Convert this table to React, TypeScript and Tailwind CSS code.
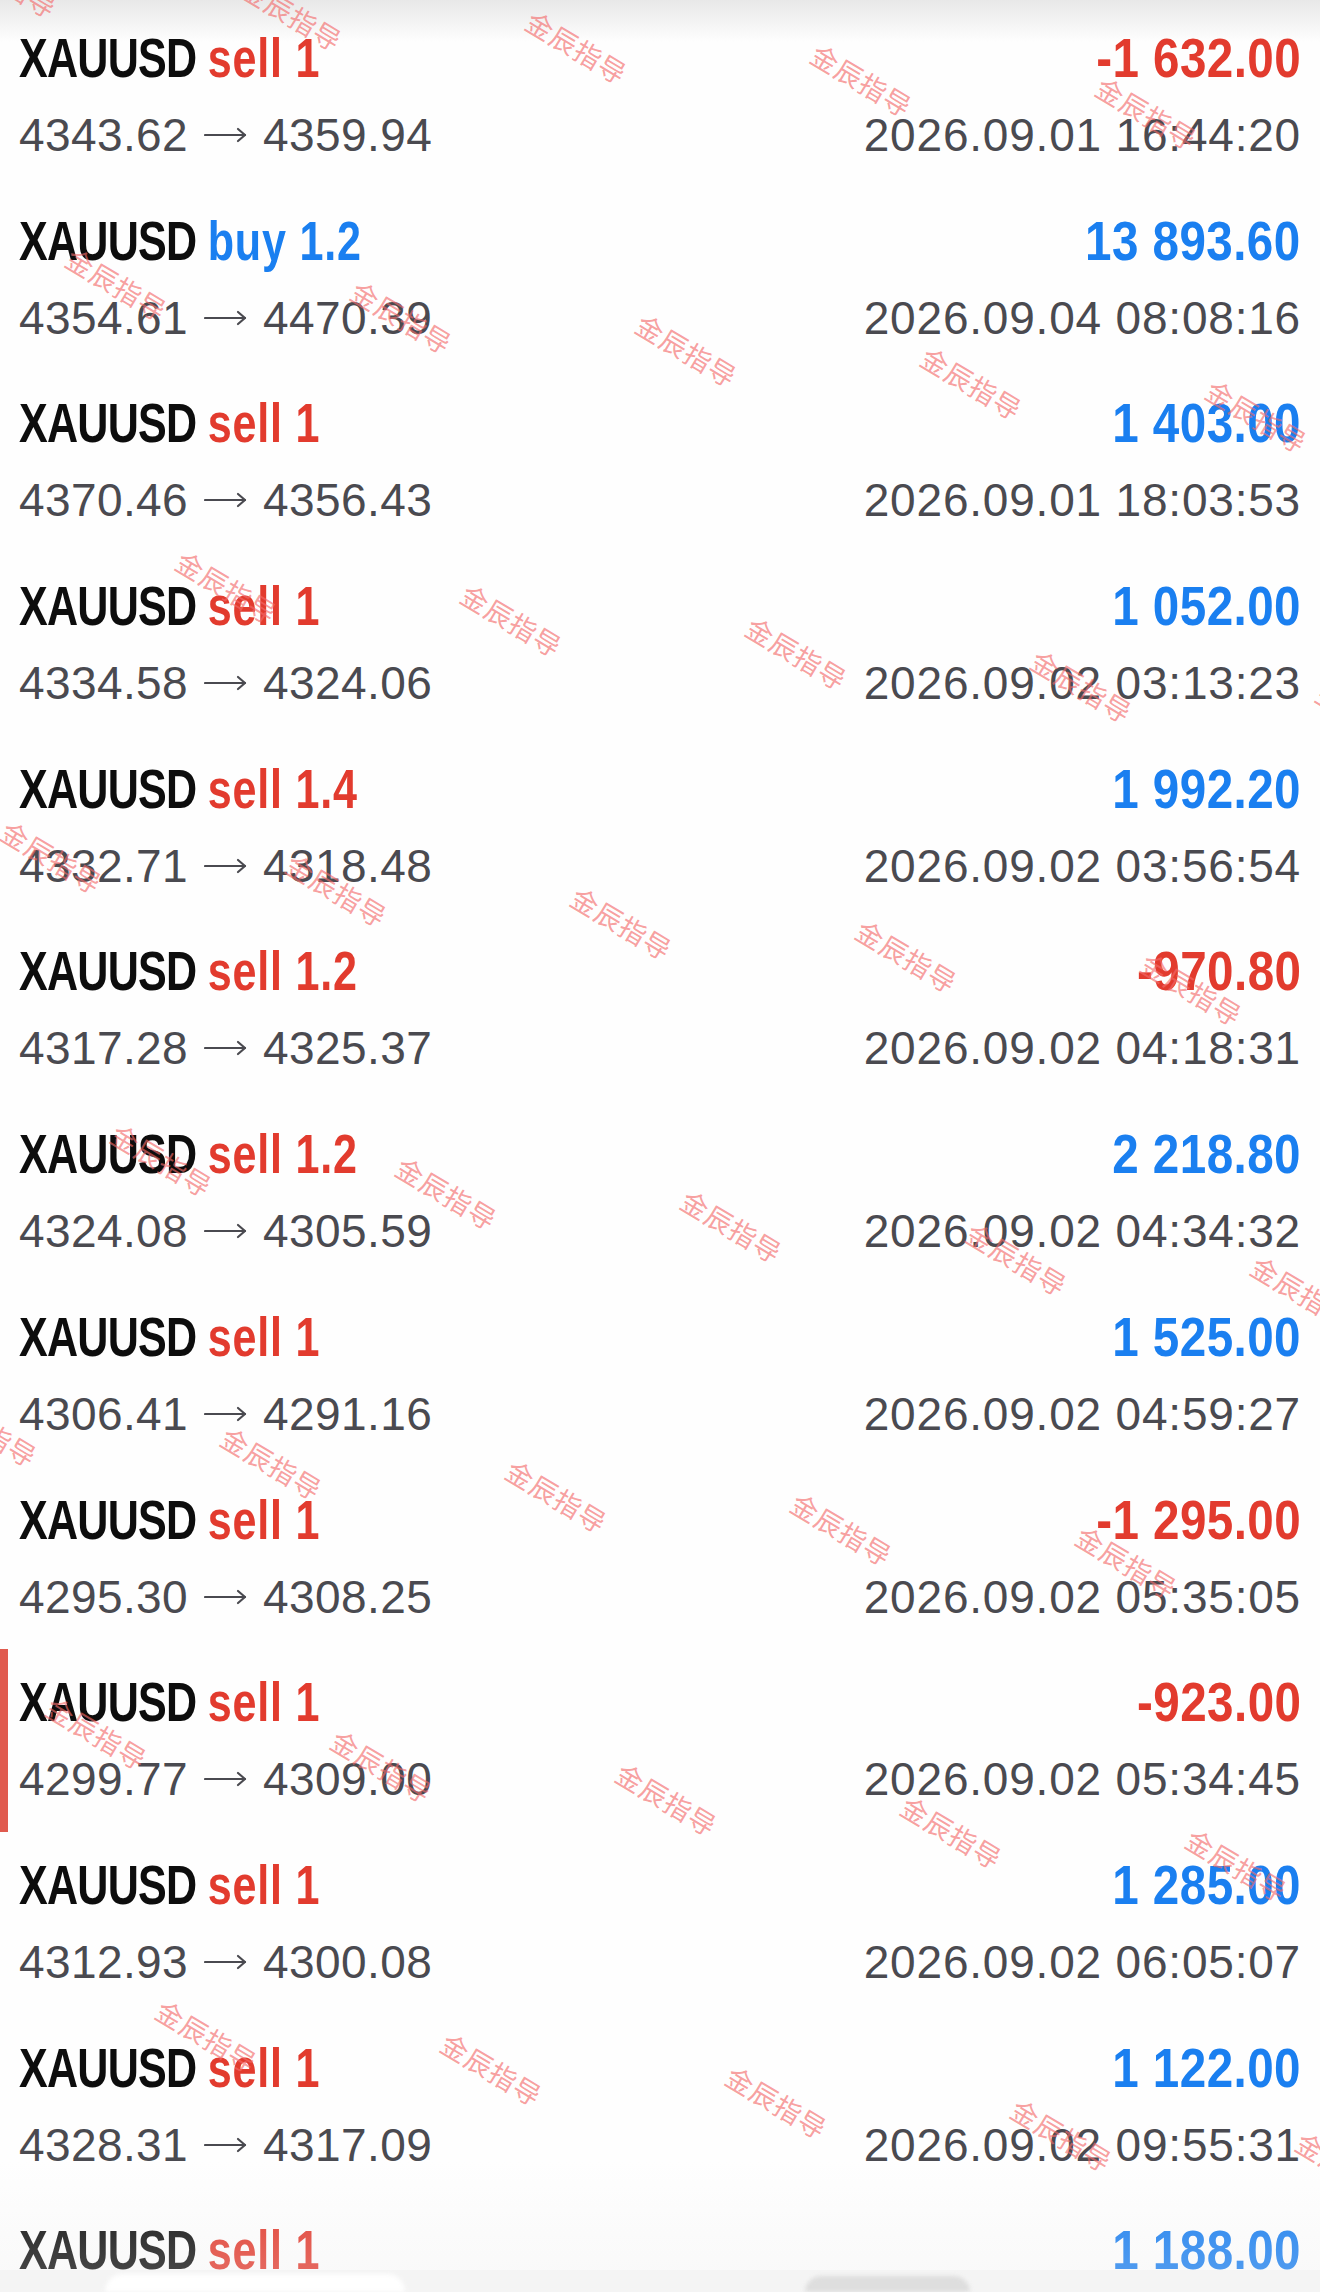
import React from 'react';

type Deal = {
  side: 'buy' | 'sell';
  lots: string;
  open: string;
  close: string;
  profit: string;
  time: string;
};

const deals: Deal[] = [
  { side: 'sell', lots: '1', open: '4343.62', close: '4359.94', profit: '-1 632.00', time: '2026.09.01 16:44:20' },
  { side: 'buy', lots: '1.2', open: '4354.61', close: '4470.39', profit: '13 893.60', time: '2026.09.04 08:08:16' },
  { side: 'sell', lots: '1', open: '4370.46', close: '4356.43', profit: '1 403.00', time: '2026.09.01 18:03:53' },
  { side: 'sell', lots: '1', open: '4334.58', close: '4324.06', profit: '1 052.00', time: '2026.09.02 03:13:23' },
  { side: 'sell', lots: '1.4', open: '4332.71', close: '4318.48', profit: '1 992.20', time: '2026.09.02 03:56:54' },
  { side: 'sell', lots: '1.2', open: '4317.28', close: '4325.37', profit: '-970.80', time: '2026.09.02 04:18:31' },
  { side: 'sell', lots: '1.2', open: '4324.08', close: '4305.59', profit: '2 218.80', time: '2026.09.02 04:34:32' },
  { side: 'sell', lots: '1', open: '4306.41', close: '4291.16', profit: '1 525.00', time: '2026.09.02 04:59:27' },
  { side: 'sell', lots: '1', open: '4295.30', close: '4308.25', profit: '-1 295.00', time: '2026.09.02 05:35:05' },
  { side: 'sell', lots: '1', open: '4299.77', close: '4309.00', profit: '-923.00', time: '2026.09.02 05:34:45' },
  { side: 'sell', lots: '1', open: '4312.93', close: '4300.08', profit: '1 285.00', time: '2026.09.02 06:05:07' },
  { side: 'sell', lots: '1', open: '4328.31', close: '4317.09', profit: '1 122.00', time: '2026.09.02 09:55:31' },
  { side: 'sell', lots: '1', open: '4329.17', close: '4317.29', profit: '1 188.00', time: '2026.09.02 10:12:44' },
];

// watermark lattice, centre points
const marks: { x: number; y: number }[] = [];
for (let j = -1; j <= 8; j++) {
  for (let i = -4; i <= 6; i++) {
    const x = 577 + 285 * i + 110 * j;
    const y = 47 + 33 * i + 303 * j;
    if (x > -70 && x < 1390 && y > -50 && y < 2330) marks.push({ x, y });
  }
}

function Arrow() {
  return (
    <svg width="43" height="20" viewBox="0 0 43 20" className="mx-[16px] shrink-0" fill="none" stroke="#4a4a50" strokeWidth="2.2" strokeLinecap="round" strokeLinejoin="round">
      <path d="M1 10h40" />
      <path d="M34 4l7 6-7 6" />
    </svg>
  );
}

function DealRow({ deal, selected }: { deal: Deal; selected?: boolean }) {
  const sideColor = deal.side === 'buy' ? 'text-[#1a7ff0]' : 'text-[#e23b2e]';
  const profitColor = deal.profit.startsWith('-') ? 'text-[#e23b2e]' : 'text-[#1a7ff0]';

  return (
    <div className="relative h-[182.7px] shrink-0 px-[19px] pt-[25px]">
      {selected && <div className="absolute left-0 top-0 h-full w-[8px] bg-[#e05a4e]" />}
      <div className="flex items-start justify-between font-['Liberation_Sans',sans-serif] text-[56px] font-bold leading-[56px]">
        <div className="origin-left scale-x-[0.77] whitespace-nowrap tracking-[-1px] text-[#0d0d0d]">
          XAUUSD <span className={`tracking-[1px] ${sideColor}`}>{deal.side} {deal.lots}</span>
        </div>
        <div className={`origin-right scale-x-[0.85] whitespace-nowrap tracking-[0.5px] ${profitColor}`}>
          {deal.profit}
        </div>
      </div>
      <div className="mt-[26px] flex items-start justify-between font-['Liberation_Sans',sans-serif] text-[46px] leading-[46px] text-[#4a4a50]">
        <div className="flex items-center tracking-[0.4px]">
          <span>{deal.open}</span>
          <Arrow />
          <span>{deal.close}</span>
        </div>
        <div className="tracking-[0.8px]">{deal.time}</div>
      </div>
    </div>
  );
}

export default function App() {
  return (
    <div className="relative h-[2292px] w-[1320px] overflow-hidden bg-[#fefefe]">
      <div className="absolute inset-x-0 top-0 h-[42px] bg-gradient-to-b from-[#e8e8e8] to-transparent" />

      <div className="flex flex-col pt-[5px]">
        {deals.map((d, idx) => (
          <DealRow key={idx} deal={d} selected={idx === 9} />
        ))}
      </div>

      {/* watermark */}
      <div className="pointer-events-none absolute inset-0">
        {marks.map((m, k) => (
          <span
            key={k}
            className="absolute -translate-x-1/2 -translate-y-1/2 rotate-[31deg] whitespace-nowrap font-['Noto_Sans_CJK_SC',sans-serif] text-[27px] leading-none tracking-[1px] text-[#f36a6a]/65"
            style={{ left: m.x, top: m.y }}
          >
            金辰指导
          </span>
        ))}
      </div>

      {/* bottom frosted bar */}
      <div className="absolute inset-x-0 top-[2160px] h-[110px] bg-gradient-to-b from-transparent to-[#ececec]/25" />
      <div className="absolute inset-x-0 top-[2270px] h-[22px] bg-[#f3f3f3]/90 backdrop-blur-md">
        <div className="flex h-full items-end gap-[400px] pl-[105px]">
          <div className="h-[18px] w-[300px] rounded-t-[30px] bg-white blur-[2px]" />
          <div className="h-[16px] w-[165px] rounded-t-[30px] bg-[#dedede] blur-[2px]" />
        </div>
      </div>
    </div>
  );
}
